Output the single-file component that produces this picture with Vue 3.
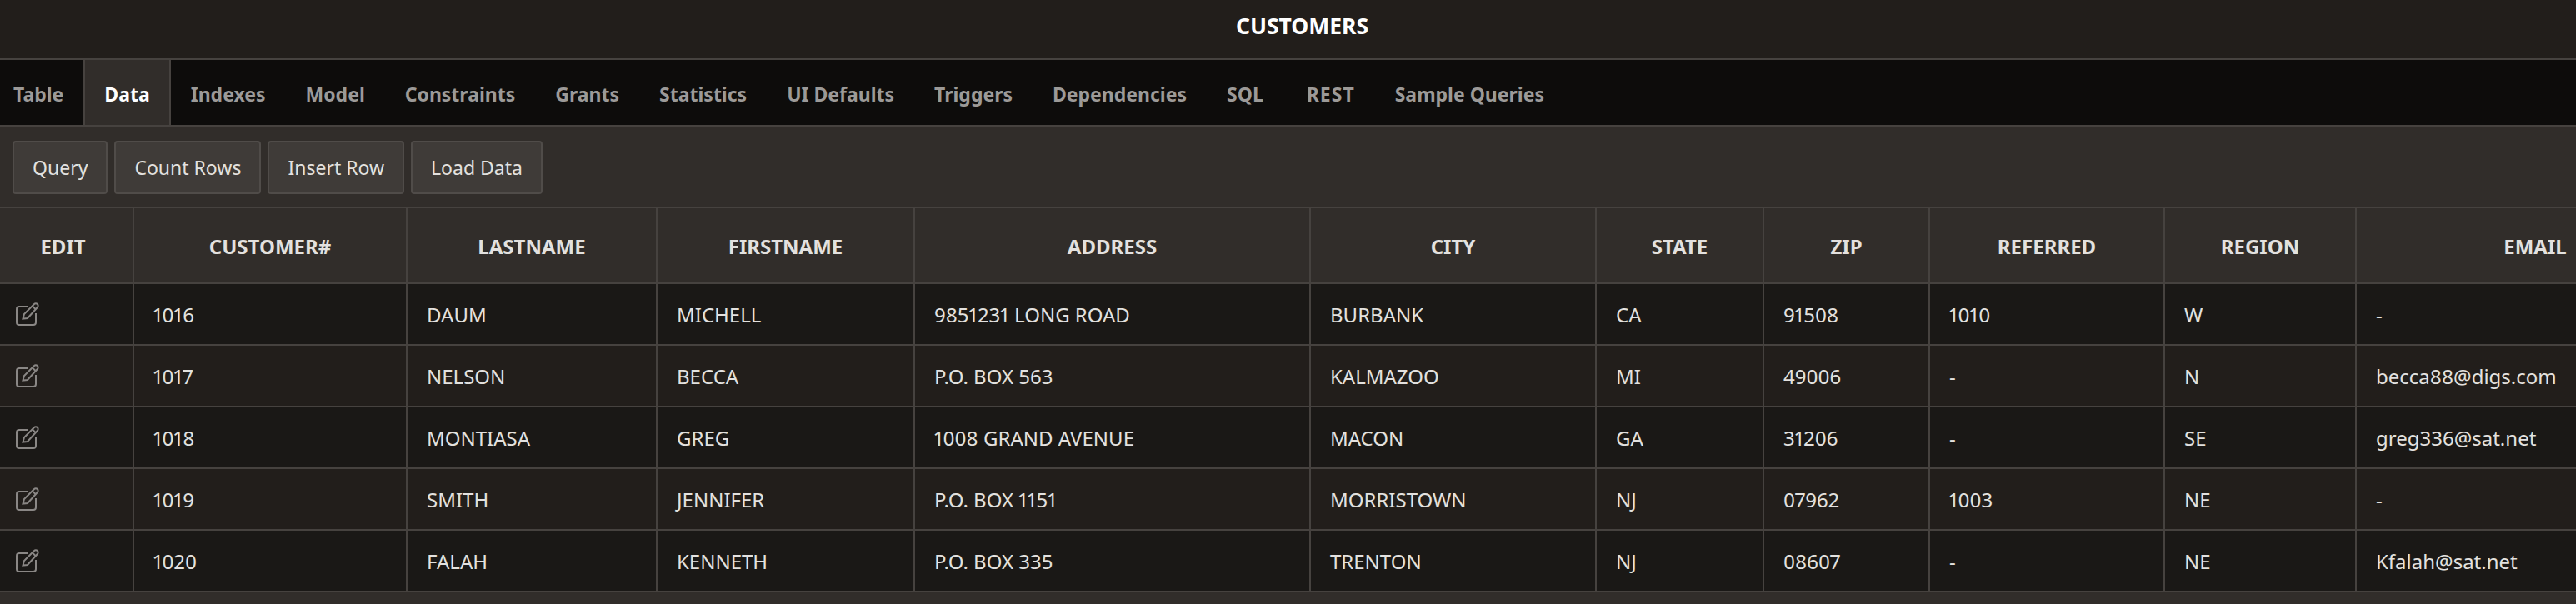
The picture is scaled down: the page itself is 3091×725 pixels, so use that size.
<script setup>
const tabs = ['Table', 'Data', 'Indexes', 'Model', 'Constraints', 'Grants', 'Statistics', 'UI Defaults', 'Triggers', 'Dependencies', 'SQL', 'REST', 'Sample Queries']
const buttons = ['Query', 'Count Rows', 'Insert Row', 'Load Data']
const columns = [
  { name: 'EDIT', width: 160 },
  { name: 'CUSTOMER#', width: 328 },
  { name: 'LASTNAME', width: 300 },
  { name: 'FIRSTNAME', width: 309 },
  { name: 'ADDRESS', width: 475 },
  { name: 'CITY', width: 343 },
  { name: 'STATE', width: 201 },
  { name: 'ZIP', width: 199 },
  { name: 'REFERRED', width: 282 },
  { name: 'REGION', width: 230 },
  { name: 'EMAIL', width: 430 }
]
const rows = [
  ['1016', 'DAUM', 'MICHELL', '9851231 LONG ROAD', 'BURBANK', 'CA', '91508', '1010', 'W', '-'],
  ['1017', 'NELSON', 'BECCA', 'P.O. BOX 563', 'KALMAZOO', 'MI', '49006', '-', 'N', 'becca88@digs.com'],
  ['1018', 'MONTIASA', 'GREG', '1008 GRAND AVENUE', 'MACON', 'GA', '31206', '-', 'SE', 'greg336@sat.net'],
  ['1019', 'SMITH', 'JENNIFER', 'P.O. BOX 1151', 'MORRISTOWN', 'NJ', '07962', '1003', 'NE', '-'],
  ['1020', 'FALAH', 'KENNETH', 'P.O. BOX 335', 'TRENTON', 'NJ', '08607', '-', 'NE', 'Kfalah@sat.net']
]
</script>

<template>
  <div class="page">
    <header class="title-bar">CUSTOMERS</header>

    <nav class="tabs">
      <a v-for="tab in tabs" :key="tab" class="tab" :class="{ active: tab === 'Data' }">{{ tab }}</a>
    </nav>

    <div class="toolbar">
      <button v-for="b in buttons" :key="b" class="btn">{{ b }}</button>
    </div>

    <div class="table-wrap">
      <table class="grid">
        <colgroup>
          <col v-for="c in columns" :key="c.name" :style="{ width: c.width + 'px' }" />
        </colgroup>
        <thead>
          <tr>
            <th v-for="c in columns" :key="c.name">{{ c.name }}</th>
          </tr>
        </thead>
        <tbody>
          <tr v-for="row in rows" :key="row[0]">
            <td class="edit-cell">
              <svg class="edit-icon" viewBox="0 0 28 28" fill="none" stroke="#8a8785" stroke-width="2">
                <path d="M15 5H4a3 3 0 0 0-3 3v16a3 3 0 0 0 3 3h17a3 3 0 0 0 3-3V13" />
                <path d="M8.5 19.5l1.5-5.5L22 2a2.6 2.6 0 0 1 3.8 0 2.8 2.8 0 0 1 0 4L14 19z" />
                <path d="M20 4.5l4 4" />
              </svg>
            </td>
            <td v-for="(val, i) in row" :key="i">{{ val }}</td>
          </tr>
        </tbody>
      </table>
    </div>
  </div>
</template>

<style>
html, body {
  margin: 0;
  background: #312d2a;
}
</style>

<style scoped>
.page {
  width: 3091px;
  height: 725px;
  overflow: hidden;
  background: #312d2a;
  font-family: "Noto Sans", "Open Sans", sans-serif;
  color: #e3e1df;
}

.title-bar {
  height: 72px;
  box-sizing: border-box;
  padding-left: 34px;
  border-bottom: 2px solid #46423f;
  background: #221e1b;
  color: #fff;
  font-size: 26.5px;
  font-weight: 700;
  line-height: 62px;
  text-align: center;
}

.tabs {
  display: flex;
  height: 80px;
  box-sizing: border-box;
  border-bottom: 2px solid #46423f;
  background: #0d0c0b;
}

.tab {
  padding: 0 24px;
  color: #9c9a98;
  font-size: 23px;
  font-weight: 700;
  line-height: 83px;
}

.tab:first-child {
  padding-left: 16px;
  padding-right: 24px;
}

.tab.active {
  padding: 0 23px;
  border-left: 2px solid #46423f;
  border-right: 2px solid #46423f;
  background: #312d2a;
  color: #fff;
}

.tab:nth-child(12) {
  padding-left: 28px;
  letter-spacing: 1px;
}

.toolbar {
  display: flex;
  gap: 8px;
  height: 98px;
  box-sizing: border-box;
  padding: 17px 15px;
  border-bottom: 2px solid #46423f;
}

.btn {
  height: 64px;
  padding: 0 22px;
  border: 2px solid #504c49;
  border-radius: 4px;
  background: #3f3b38;
  color: #e3e1df;
  font-family: inherit;
  font-size: 23px;
}

.table-wrap {
  overflow: hidden;
}

.grid {
  width: 3257px;
  table-layout: fixed;
  border-collapse: collapse;
}

th, td {
  padding: 0 23px;
  border: 2px solid #46423f;
  white-space: nowrap;
  text-align: left;
  overflow: hidden;
}

th:first-child, td:first-child {
  border-left: 0;
}

thead tr:first-child th {
  border-top: 0;
}

th {
  height: 87px;
  padding-top: 2px;
  background: #312d2a;
  font-size: 24px;
  font-weight: 700;
  text-align: center;
}

th:first-child {
  padding-right: 31px;
}

td {
  height: 72px;
  font-size: 24px;
  font-variant-numeric: proportional-nums;
}

tbody tr:nth-child(odd) td {
  background: #1a1816;
}

tbody tr:nth-child(even) td {
  background: #221e1b;
}

.edit-icon {
  display: block;
  width: 28px;
  height: 28px;
  margin-left: -4px;
}
</style>
